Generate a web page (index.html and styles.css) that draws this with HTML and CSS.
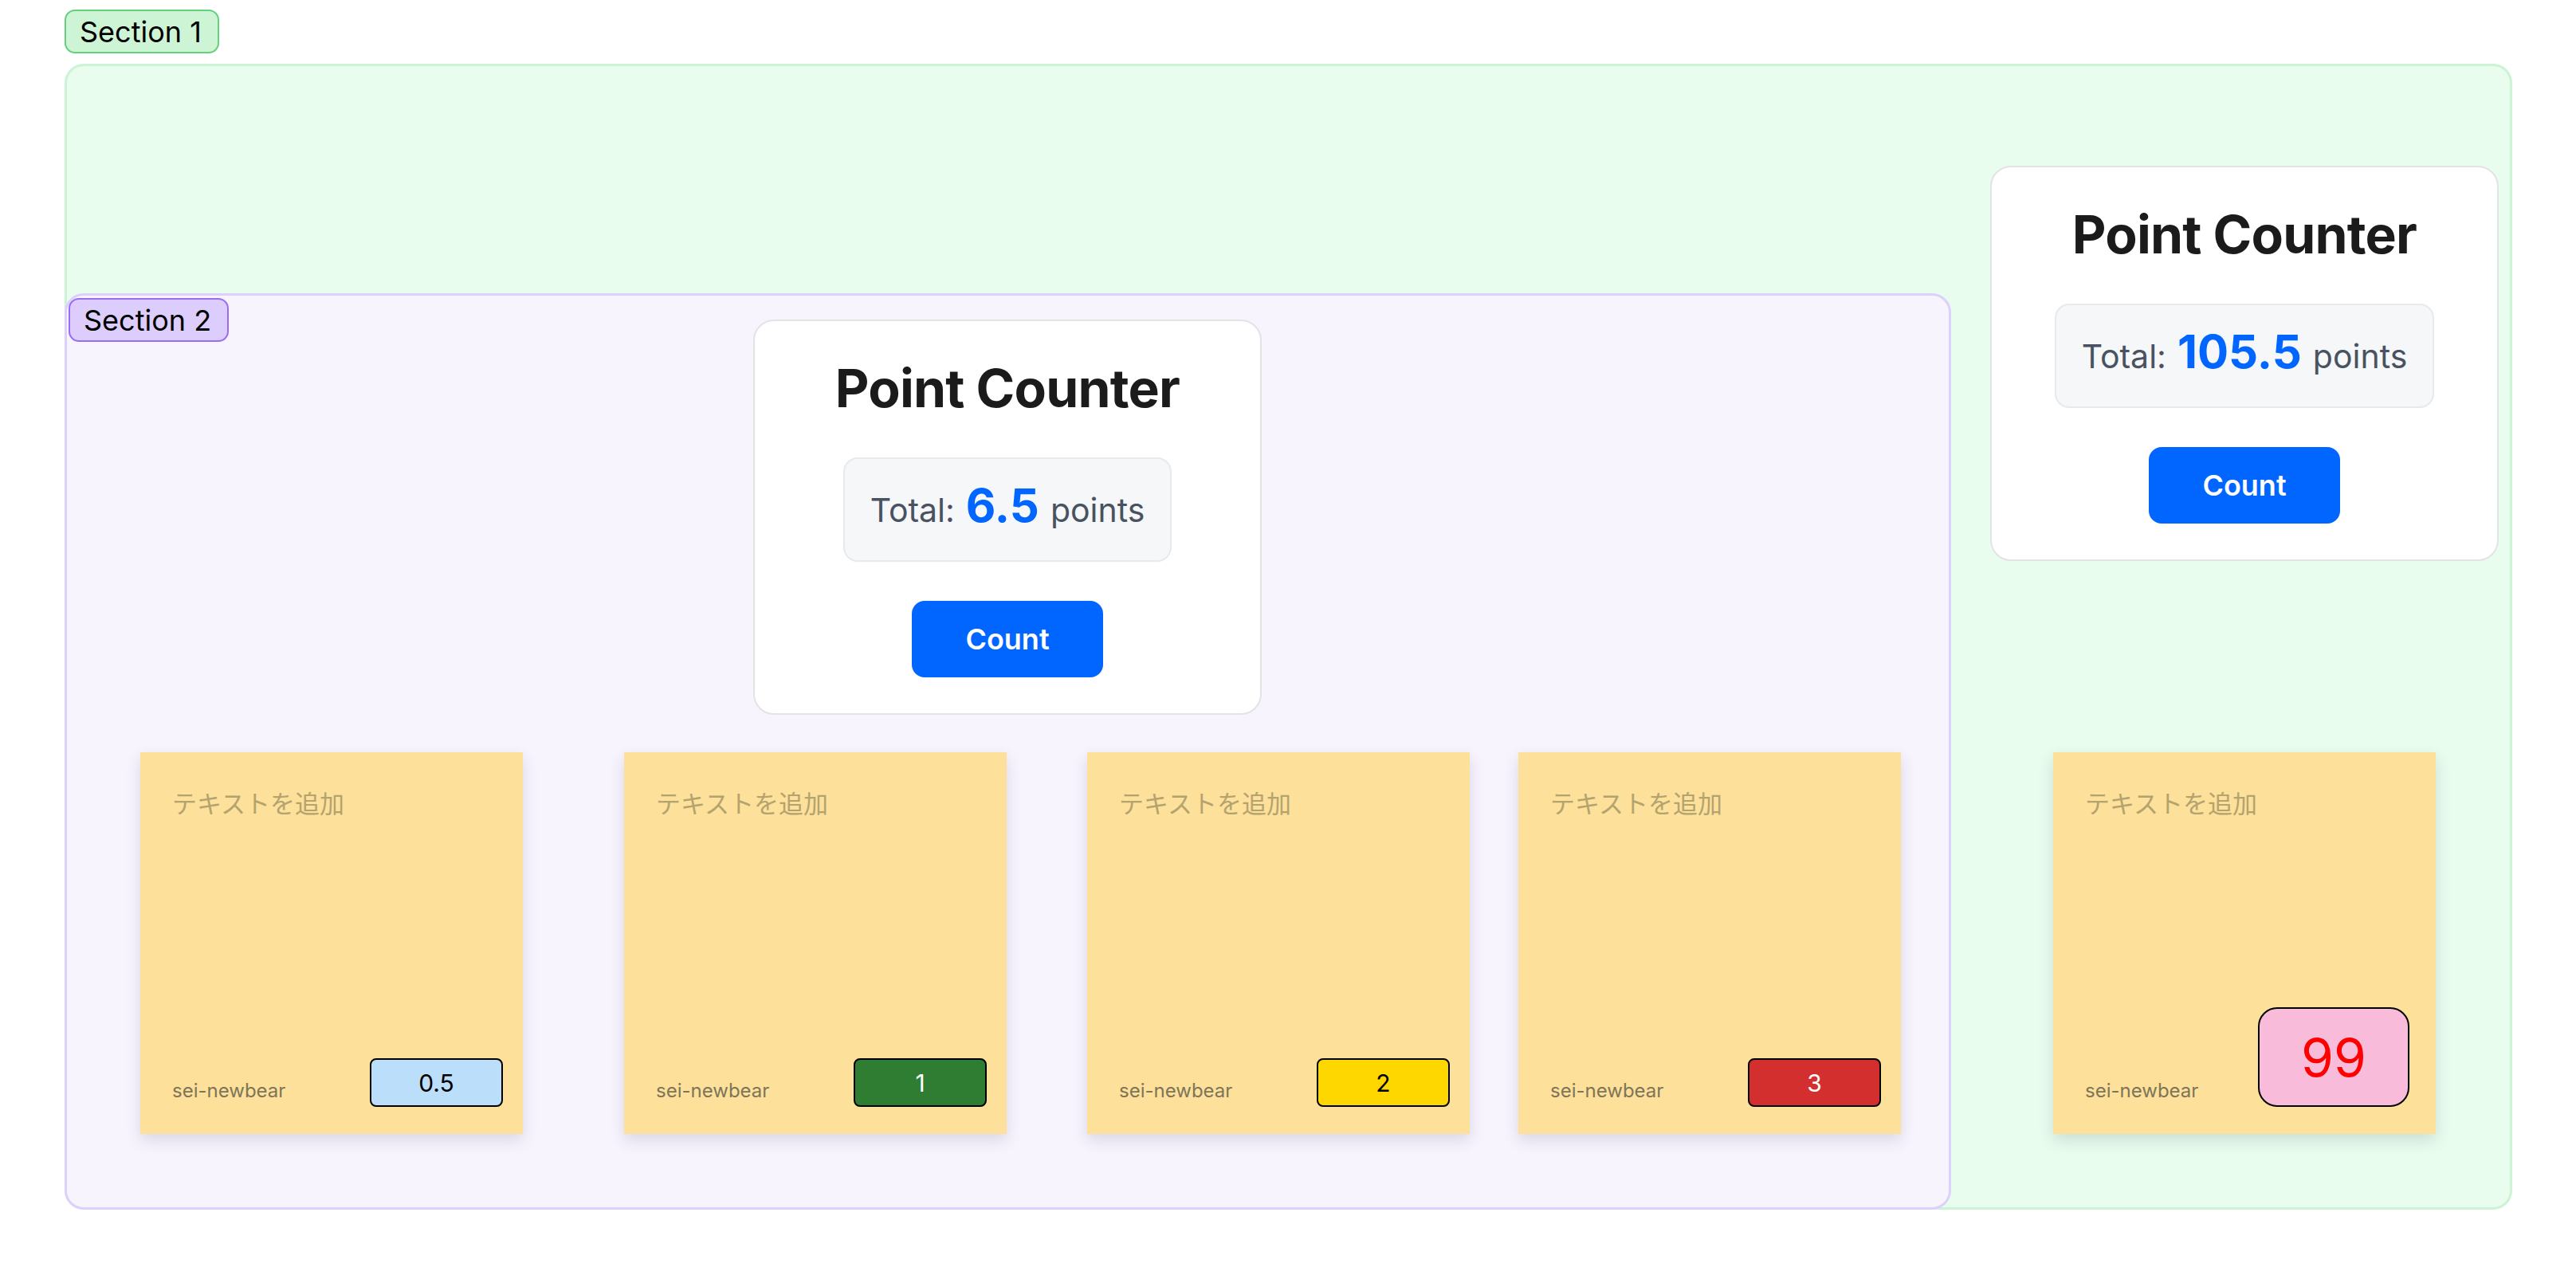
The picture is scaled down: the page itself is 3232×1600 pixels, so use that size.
FILE: index.html
```html
<!DOCTYPE html>
<html lang="ja">
<head>
<meta charset="utf-8">
<title>Board</title>
<link rel="stylesheet" href="styles.css">
</head>
<body>
<div class="board">
  <div class="section-tag tag-green tag-s1">Section 1</div>
  <div class="section section-green sec-1"></div>
  <div class="section section-purple sec-2">
    <div class="section-tag tag-purple tag-s2">Section 2</div>
  </div>

  <div class="counter counter-1">
    <h1 class="counter-title">Point Counter</h1>
    <div class="total">
      <span class="total-label">Total:</span>
      <span class="total-value">6.5</span>
      <span class="total-label">points</span>
    </div>
    <button class="count-btn">Count</button>
  </div>

  <div class="counter counter-2">
    <h1 class="counter-title">Point Counter</h1>
    <div class="total">
      <span class="total-label">Total:</span>
      <span class="total-value">105.5</span>
      <span class="total-label">points</span>
    </div>
    <button class="count-btn">Count</button>
  </div>

  <div class="sticky st-1">
    <div class="sticky-placeholder">テキストを追加</div>
    <div class="sticky-foot">
      <span class="sticky-author">sei-newbear</span>
      <span class="score score-light">0.5</span>
    </div>
  </div>
  <div class="sticky st-2">
    <div class="sticky-placeholder">テキストを追加</div>
    <div class="sticky-foot">
      <span class="sticky-author">sei-newbear</span>
      <span class="score score-green">1</span>
    </div>
  </div>
  <div class="sticky st-3">
    <div class="sticky-placeholder">テキストを追加</div>
    <div class="sticky-foot">
      <span class="sticky-author">sei-newbear</span>
      <span class="score score-yellow">2</span>
    </div>
  </div>
  <div class="sticky st-4">
    <div class="sticky-placeholder">テキストを追加</div>
    <div class="sticky-foot">
      <span class="sticky-author">sei-newbear</span>
      <span class="score score-red">3</span>
    </div>
  </div>
  <div class="sticky st-5">
    <div class="sticky-placeholder">テキストを追加</div>
    <div class="sticky-foot">
      <span class="sticky-author">sei-newbear</span>
      <span class="score score-big">99</span>
    </div>
  </div>
</div>
</body>
</html>
```

FILE: styles.css
```css
* { box-sizing: border-box; }

html, body {
  margin: 0;
  padding: 0;
  background: #ffffff;
}

body {
  font-family: "Inter", "Noto Sans CJK JP", "Noto Sans", sans-serif;
  color: #000;
}

.board {
  position: relative;
  width: 3232px;
  height: 1600px;
  overflow: hidden;
}

/* ---------- sections (canvas frames) ---------- */
.section {
  position: absolute;
  border-width: 3px;
  border-style: solid;
  border-radius: 24px;
}
.section-green {
  background: #e8fdee;
  border-color: #cdf3d6;
}
.section-purple {
  background: #f7f4fe;
  border-color: #ddd0fc;
}
.sec-1 { left: 81px; top: 80px; width: 3071px; height: 1438px; }
.sec-2 { left: 81px; top: 368px; width: 2367px; height: 1150px; }

.section-tag {
  position: absolute;
  font-size: 36px;
  line-height: 43px;
  padding: 5px 20px 3px 17px;
  border: 2px solid;
  border-radius: 13px;
  color: #000;
  white-space: nowrap;
}
.tag-green {
  background: #cdf5d5;
  border-color: #63d07c;
}
.tag-purple {
  background: #dccdfd;
  border-color: #9a6cf4;
}
.tag-s1 { left: 81px; top: 12px; }
.tag-s2 { left: 2px; top: 3px; }

/* ---------- point counter widget ---------- */
.counter {
  position: absolute;
  width: 638px;
  height: 496px;
  background: #ffffff;
  border: 2px solid #e3e3e6;
  border-radius: 26px;
  display: flex;
  flex-direction: column;
  align-items: center;
  padding-top: 44px;
}
.counter-1 { left: 945px; top: 401px; }
.counter-2 { left: 2497px; top: 208px; }

.counter-title {
  margin: 0;
  font-size: 66px;
  line-height: 80px;
  font-weight: 700;
  color: #1b1b1b;
  letter-spacing: -0.8px;
}

.total {
  margin-top: 47px;
  display: flex;
  align-items: baseline;
  gap: 14px;
  padding: 23px 32px 34px;
  background: #f6f7f9;
  border: 2px solid #e7e9ec;
  border-radius: 18px;
}
.total-label {
  font-size: 41px;
  color: #495261;
}
.total-value {
  font-size: 58px;
  line-height: 70px;
  font-weight: 700;
  color: #0066ff;
}

.count-btn {
  margin-top: 49px;
  width: 240px;
  height: 96px;
  border: none;
  border-radius: 16px;
  background: #0066ff;
  color: #ffffff;
  font-family: inherit;
  font-size: 36px;
  font-weight: 600;
  display: flex;
  align-items: center;
  justify-content: center;
}

/* ---------- sticky notes ---------- */
.sticky {
  position: absolute;
  top: 944px;
  width: 480px;
  height: 479px;
  background: #fde09a;
  box-shadow: 0 8px 18px rgba(40, 40, 80, 0.14);
  display: flex;
  flex-direction: column;
  justify-content: space-between;
  padding: 40px 25px 34px 40px;
}
.st-1 { left: 176px; }
.st-2 { left: 783px; }
.st-3 { left: 1364px; }
.st-4 { left: 1905px; }
.st-5 { left: 2576px; }

.sticky-placeholder {
  font-family: "Noto Sans CJK JP", "Inter", sans-serif;
  font-size: 31px;
  color: #b4a36f;
}

.sticky-foot {
  display: flex;
  justify-content: space-between;
  align-items: flex-end;
}
.sticky-author {
  font-size: 24px;
  line-height: 29px;
  margin-bottom: 6px;
  color: #7e7558;
}

.score {
  width: 167px;
  height: 61px;
  border: 2px solid #000;
  border-radius: 8px;
  display: flex;
  align-items: center;
  justify-content: center;
  font-size: 30px;
}
.score-light { background: #bbdefb; color: #000; }
.score-green { background: #2e7d32; color: #fff; }
.score-yellow { background: #ffd700; color: #000; }
.score-red { background: #d32f2f; color: #fff; }
.score-big {
  width: 190px;
  height: 125px;
  margin-right: 8px;
  border-radius: 24px;
  background: #f8bbd9;
  color: #ff0000;
  font-size: 66px;
}
```
